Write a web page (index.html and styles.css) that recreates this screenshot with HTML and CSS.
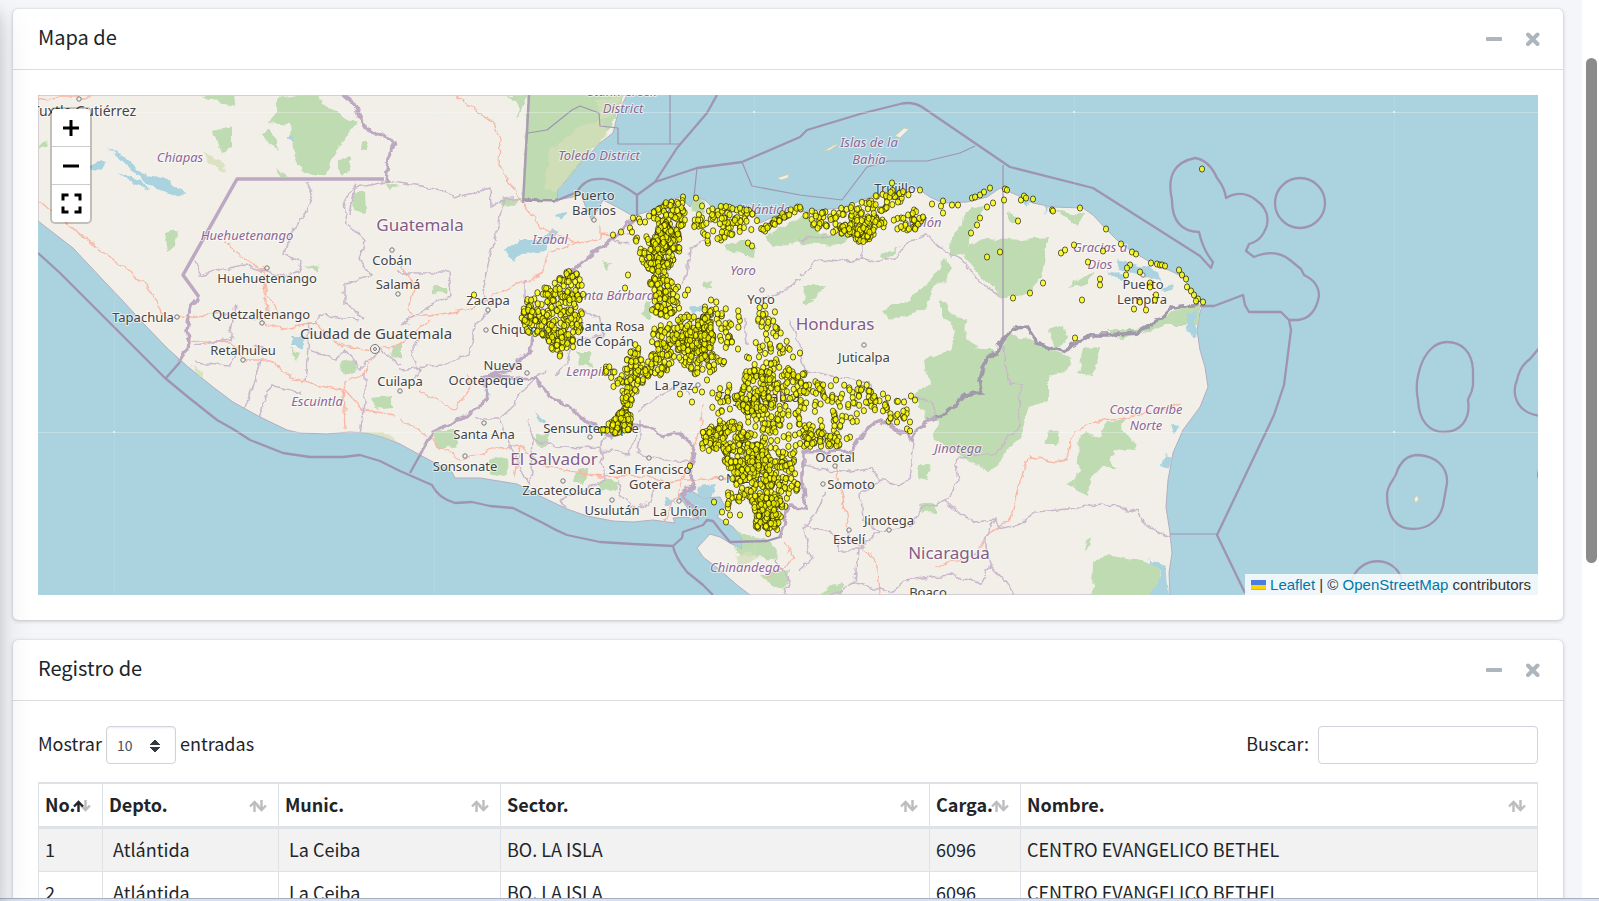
FILE: index.html
```html
<!DOCTYPE html>
<html lang="es">
<head>
<meta charset="utf-8">
<meta name="viewport" content="width=device-width, initial-scale=1">
<title>Mapa y registro</title>
<link rel="stylesheet" href="styles.css">
</head>
<body>
<svg class="sprite" aria-hidden="true">
  <symbol id="minus" viewBox="0 0 16 16"><rect x="0" y="6" width="16" height="4" rx="1"/></symbol>
  <symbol id="times" viewBox="0 0 14 14"><path d="M2 2.5L11.5 12M11.5 2.5L2 12" fill="none" stroke="currentColor" stroke-width="4" stroke-linecap="round"/></symbol>
  <symbol id="sort" viewBox="0 0 18 14"><g fill="none" stroke="currentColor" stroke-width="2.4"><path class="up" d="M5.500 13V3M1 7.500L5.500 3L10 7.500"/><path class="down" d="M12.500 1V11M8 6.500L12.500 11L17 6.500"/></g></symbol>
  <symbol id="sort-asc" viewBox="0 0 18 14"><g fill="none" stroke-width="2.4"><path stroke="#bcbdbf" d="M12.500 1V11M8 6.500L12.500 11L17 6.500"/><path stroke="#212529" d="M5.500 13V3M1 7.500L5.500 3L10 7.500"/></g></symbol>
</svg>
<div class="window">
  <div class="view">
    <div class="sidebar-edge"></div>
    <main class="content">
      <section class="card">
        <header class="card-header">
          <h3>Mapa de</h3>
          <div class="tools">
            <button type="button" aria-label="Contraer"><svg class="i-minus"><use href="#minus"/></svg></button>
            <button type="button" aria-label="Cerrar"><svg class="i-times"><use href="#times"/></svg></button>
          </div>
        </header>
        <div class="card-body">
          <div class="map">
            <svg class="tiles" viewBox="38 95 1500 500" preserveAspectRatio="xMidYMid slice" role="img" aria-label="Mapa de Honduras">
              <defs>
                <filter id="rough" x="-5%" y="-5%" width="110%" height="110%"><feTurbulence type="fractalNoise" baseFrequency="0.09" numOctaves="3" seed="4"/><feDisplacementMap in="SourceGraphic" scale="8" xChannelSelector="R" yChannelSelector="G"/></filter>
                <clipPath id="landclip"><path id="land" d="M38 95V221L73 248L103 280L122 300L143 323L167 348L187 366L213 387L233 402L260 417L287 430L300 433L327 434L350 432L367 433L383 437L400 444L420 455L452 472L455 478L480 478L517 484L540 496L567 509L587 516L613 521L633 522L653 520L675 523L673 518L687 517L695 520L687 507L678 495L690 490L703 498L720 497L725 507L717 517L733 527L742 538L742 549L730 543L720 537L710 534L697 548L703 557L720 570L737 585L750 595H1170L1169 573L1172 553L1170 533L1166 507L1168 480L1173 453L1183 430L1200 407L1208 387L1205 367L1200 350L1197 330L1200 312L1203 305L1196 298L1183 277L1173 272L1150 262L1130 250L1117 240L1107 230L1093 215L1083 208L1053 207L1033 203L1017 195L1000 188L987 197L967 202L943 203L930 197L917 188L890 192L867 198L843 208L817 210L800 212L793 208L773 217L760 223L753 212L733 212L713 208L705 200L695 197L690 207L680 197L663 202L653 210L633 216L617 207L603 200L597 211L592 221L585 205L580 192L573 197L557 200L557 190L567 180L577 167L587 157L600 143L613 133L618 113L627 95Z"/></clipPath>
              </defs>
              <rect x="-962" y="-405" width="3500" height="1500" fill="#aad3df"/>
              <use href="#land" fill="#f2efe9" stroke="#b5adc0" stroke-width="1"/>
              <g clip-path="url(#landclip)"><g fill="#bfdbb2" filter="url(#rough)">
                <path d="M529 90H627L618 113L600 143L567 180L557 200L523 200Z"/>
                <path d="M277 99L318 93L324 105L357 122L345 140L338 148L330 165L322 176L305 174L298 162L293 150L290 124L268 122L277 112Z"/>
                <path d="M200 95H236L234 106L220 102ZM213 132L232 127V148L222 152ZM260 133L270 130L279 151L270 146ZM353 193L365 193L366 212L354 210ZM275 168L288 178L280 177ZM362 140L368 140L367 152L361 150ZM340 160L350 155L350 172L340 176Z"/>
                <path d="M963 250L987 237L1020 240L1048 238L1045 260L1040 280L1030 292L1017 297L1003 297L985 280L967 262Z"/>
                <path d="M985 203L980 215L971 237L967 252L948 257L950 240L967 213ZM1008 210L1020 218L1017 222L1008 222ZM1055 210L1085 215L1078 225ZM1070 285L1093 270L1088 283L1068 287Z"/>
                <path d="M945 259L951 267L947 280L933 285L925 308L910 315L890 320L882 310L910 300L930 280ZM941 301L947 304L957 318L967 320L966 340L980 348L950 352L955 330L941 315Z"/>
                <path d="M925 360L957 346L983 350L998 350L1010 333L1030 340L1047 348L1072 358L1070 367L1047 377L1047 403L1030 407L1020 440L1007 450L1000 463L987 472L970 460L933 438L938 420L927 420L915 395L928 383Z"/>
                <path d="M1083 348L1100 347L1093 376L1078 373ZM1105 330L1135 330L1163 318L1185 305L1200 304V325L1165 325L1140 334L1120 338Z"/>
                <path d="M1108 422L1125 418L1122 430L1133 440L1135 450L1114 448L1110 462L1119 468L1102 468L1090 480L1088 495L1067 485L1080 473L1077 445L1085 432L1100 436ZM1048 432L1060 430L1057 445L1045 445ZM1085 540L1093 537L1087 552Z"/>
                <path d="M1093 560L1110 555L1153 562L1162 580L1153 600H1092Z"/>
                <path d="M765 235L790 223L805 215L820 232L800 242L775 247ZM725 245L745 240L757 250L753 256L728 252ZM800 230L850 238L840 245L800 243ZM880 255L900 247L885 260ZM804 285L824 285L817 298L803 302ZM815 300L805 305L802 300ZM918 465L930 465L928 480L918 478ZM920 505L935 502L935 512L922 513ZM690 195L705 200L702 215L692 212ZM578 352L590 352L592 366L580 365ZM645 302L650 300L650 320L643 317ZM600 262L610 264L607 270ZM703 282L713 280L712 288L704 287Z"/>
                <path d="M433 432L455 430L458 445L440 448L433 440ZM490 460L507 457L508 475L490 474ZM537 435L548 433L545 447L536 443ZM597 480L617 480L615 490L600 492ZM575 472L590 468L583 483L572 482ZM370 397L392 395L392 408L375 410ZM393 345L402 343L402 360L390 356ZM340 363L352 360L358 370L345 375ZM290 350L300 352L297 360ZM305 265L320 267L319 274ZM433 287L448 287L447 294L433 293ZM500 200L520 198L515 206L500 205ZM515 120L529 95H508L518 108ZM355 245L360 243ZM165 233L178 230L175 247L168 253ZM38 148L48 138L45 147ZM384 182L400 187L390 190ZM1048 330L1065 325L1067 340L1055 348ZM725 530L770 540L780 560L740 555ZM760 575L790 570L785 590L770 585ZM830 585L842 582L842 595H820Z"/>
              </g>
              <g fill="#d5dfb9" opacity=".8" filter="url(#rough)"><path d="M575 130L600 120L608 135L580 160L557 192L545 190L550 150ZM597 100L620 97L617 112L600 120ZM190 365L205 375L200 380ZM360 432L385 432L395 442L375 437ZM202 150L224 165L225 172L208 162ZM735 555L750 550L760 560L740 565Z"/></g>
              <g fill="#aad3df" filter="url(#rough)">
                <path d="M107 148L125 157L145 175L165 178L187 196L175 195L145 183L125 162ZM89 167L97 160L108 162L103 170ZM119 173L140 180L150 190L135 185Z"/>
                <path d="M504 250L520 240L540 240L553 228L560 231L545 250L522 253L512 263ZM556 215L567 213L560 222ZM290 337L306 337L302 347L292 347ZM536 413L546 420L545 424L537 420ZM484 387L492 393L488 397ZM287 137L294 135L292 143ZM695 488L715 485L710 500L700 505ZM665 497L678 505H667Z"/>
                <path d="M1115 260L1140 265L1158 270L1160 280L1140 275L1120 270ZM1108 270L1125 275L1127 282L1112 277ZM1042 205L1048 205L1047 213ZM1020 200L1030 202L1025 208ZM1160 290L1172 285L1170 292ZM1186 315L1197 310L1195 340L1187 330ZM1165 455L1175 457L1168 470L1162 466ZM1170 425L1180 427L1175 433ZM1150 558L1165 565L1168 595H1150L1160 575ZM690 307L705 305L700 312L692 313Z"/>
              </g></g>
              <g fill="none" stroke="#f9b7a5" stroke-width="1.300" filter="url(#rough)">
                <path d="M38 200L85 238L125 268L147 287L160 305L165 318L188 317L225 313L257 320L280 329L300 325L315 322L328 338L350 347L375 350L398 345M190 340L230 343L245 360L275 360L280 373L315 385L343 390L345 430M345 390L363 410L395 415M225 240L235 253L262 270L268 297L280 315M262 265L268 320M378 352L363 375L345 382L343 398"/>
                <path d="M455 95L495 125L500 140L499 165L522 202L545 230L580 243L600 238L600 225M600 234L635 236M580 240L550 253L540 275L490 297L465 310L415 318L407 310L415 285L400 265M398 345L430 320M38 100L60 97L90 97"/>
                <path d="M420 390L455 410L470 390L468 375M400 418L432 440L460 460L500 448L520 445L540 465L600 477L640 475L665 483L690 480L712 479L735 478M665 523L680 490L700 430L703 405M520 445L515 480"/>
                <path d="M835 465L843 498L850 540L870 555L878 568L880 595M990 533L1010 520L1025 465L1030 457L1065 462L1075 430L1105 420L1140 415L1180 404M990 533L975 555L935 568M785 540L792 560L765 580"/>
              </g>
              <g fill="none" stroke="#c9b8cb" stroke-width="1.500" filter="url(#rough)">
                <path d="M307 182L313 195L305 212L290 235L285 255L302 262L298 272L285 277L260 270L243 265L220 270L200 275L195 260M355 185L345 200L347 225L365 240L358 260L370 275L345 285L345 305L365 317M384 182L355 188L350 215M360 320L320 315L310 325L307 360L305 382M380 180L400 182L440 190L455 198L490 188L491 205L505 200L523 198M505 200L495 235L482 290L490 305M400 272L450 272L452 295L425 310L400 325M490 310L475 325L470 355L440 365L400 370M525 280L525 300L550 312L583 310L600 320L603 335L572 340L565 365L555 375"/>
                <path d="M235 305L230 340L195 345M263 350L255 345M195 362L230 365L240 345M260 360L250 400L245 408M260 417L270 385L290 390L300 395M310 350L335 360L345 350L360 370L380 350L400 365M365 372L365 405L360 432M420 340L410 350L420 370L413 380"/>
                <path d="M475 418L500 418L510 445L523 475L530 483L533 440L528 420M500 418L515 405L520 393L545 370M533 440L560 448L600 447L605 480L560 500L567 510M605 435L600 450L630 453L635 435M617 478L620 495L638 510L650 500L655 485M640 420L640 440L637 455L665 460L695 462M640 410L660 395L680 385L690 395M703 240L690 250L687 275L680 285M610 240L630 245"/>
                <path d="M800 240L835 235L862 240L862 258L840 262L820 260L800 275M862 258L875 262L895 258L910 240L925 235L945 250L962 260L980 283L1003 297M790 320L800 345L805 370L850 380L870 383L875 400M905 398L930 400L937 415M1003 345L1005 365L1010 383L1022 384L1017 410L1020 425L995 453L960 457L955 465L958 480L945 500L960 515L975 522L993 520L1000 528L1025 522L1035 512L1080 508L1102 505L1140 512L1145 525L1170 537M915 435L910 480L898 485L880 480L870 468L840 472L803 465M880 480L860 495L862 520L880 530L910 527L920 510L945 500M880 530L858 550L855 583L830 595M803 525L830 530L840 550L858 550M825 493L815 515L803 530L812 560L800 570M857 583L890 593L905 580L950 575L980 583L990 565L1007 583L1015 595M993 520L985 545L990 565M760 300L785 290L800 280M745 320L747 345M775 560L790 580L785 595"/>
              </g>
              <g fill="none" stroke="#bca8c1" stroke-width="3.500" stroke-linejoin="round">
                <path d="M384 179H237L183 275L199 297"/><path d="M529 95L523 203" stroke="#a99db0" stroke-width="2.500"/>
                <g filter="url(#rough)"><path d="M340 93L355 105L362 125L372 132L395 142L388 160L386 182M199 297L190 310L187 330L190 343L180 362M637 218L630 223L607 243L570 272M532 337L530 353L517 360L508 372L483 377L537 379L550 397L570 407L587 422L613 437L633 425L653 427L663 437L680 433L695 447L690 473L695 485L682 495L700 517M483 377L488 398L463 418L433 432L420 455M788 507L806 508L803 480L803 452L850 451L857 440L880 419L897 430L913 440L918 427L937 417M785 520L788 507M780 537L785 520"/>
                <path stroke="#a298ab" d="M937 417L947 413L963 397L983 392L980 380L987 357L998 353L1000 343L1013 328L1027 327L1037 343L1063 351L1077 343L1090 335L1107 335L1137 333L1163 317L1173 307L1200 304M523 200L558 201"/></g>
              </g>
              <g fill="none" stroke="#9f94b0" stroke-width="2.300" stroke-linejoin="round">
                <path d="M38 253L60 273L87 300L117 330L165 378L188 397L217 420L233 429L250 440L283 453L310 457L343 457L360 455L380 461L400 471L432 485Q438 498 455 503L472 502L490 506L513 508L543 523Q555 530 567 535L600 542L633 544L673 546Q675 557 687 572L703 585L713 595M673 546L682 538L683 532L703 525L707 520L713 521L720 530L730 542L767 541L780 537M180 362L166 378M420 455L410 473"/>
                <path d="M717 95L707 113L677 148L655 182L637 195Q613 178 600 179Q585 178 577 192L558 200M655 182L697 168L742 162L800 137L807 130L860 114L900 104Q912 101 922 107L1010 167L1093 188L1200 256L1211 268L1213 262Q1203 250 1199 232Q1172 231 1172 200Q1164 164 1195 158Q1209 160 1217 178Q1225 188 1226 198Q1242 189 1256 200Q1270 210 1267 225Q1262 241 1249 244L1246 251L1254 257Q1275 248 1290 260L1301 269L1304 275Q1319 282 1319 296Q1315 318 1298 320L1289 320L1281 312H1249L1245 305L1243 295L1214 306H1200M1289 320L1291 330L1284 385L1274 415L1217 535L1245 593M637 195V216"/>
                <circle cx="1300" cy="203" r="25"/>
                <path d="M1447 342C1462 342 1472 352 1473 370V385C1472 395 1468 397 1468 400C1471 420 1460 432 1444 432C1430 432 1419 422 1418 400C1415 385 1418 375 1420 368C1425 352 1435 342 1447 342ZM1418 455C1435 456 1448 466 1447 483L1444 500C1442 518 1430 529 1413 529C1395 529 1387 515 1387 495C1387 485 1394 480 1396 474C1400 462 1407 455 1418 455ZM1540 347L1530 359C1520 366 1518 375 1517 380C1512 392 1514 412 1540 416M1352 580C1360 555 1395 555 1402 580M1540 465L1538 475L1540 483"/>
                <g stroke-width="1.200"><path d="M742 162L752 186L800 195L842 200L867 167L888 161H910L927 161L960 153L975 146M697 168L694 197M1003 165V343M670 95V144M680 144H618V128L600 126L599 113L580 106L572 110L547 130L528 133M1170 534H1217"/></g>
              </g>
              <g fill="#f2efe9" stroke="#c7cfae" stroke-width="1"><path d="M822 152L834 145L840 143L830 150ZM895 136L904 128L909 129L900 138ZM777 178L789 174L788 178L781 180ZM1416 495L1419 499L1416 503L1414 500Z"/></g>
              <path class="seam" d="M38 112.500H1538M38 432.500H1538"/>
              <path class="seam faint" d="M114.500 95V595M434.500 95V595M754.500 95V595M1074.500 95V595M1394.500 95V595"/>
              <path fill="#d8f7fa" d="M113 431h2v2h-2zM433 111h2v2h-2zM753 111h2v2h-2zM1073 111h2v2h-2zM1393 111h2v2h-2zM1393 431h2v2h-2z"/>
              <g id="towns" class="towns"></g>
              <g class="city">
                <text x="84" y="116" class="big">Tuxtla Gutiérrez</text><text x="267" y="283">Huehuetenango</text><text x="392" y="265">Cobán</text><text x="398" y="289">Salamá</text><text x="261" y="319">Quetzaltenango</text><text x="143" y="322">Tapachula</text><text x="243" y="355">Retalhuleu</text><text x="376" y="339" class="mid">Ciudad de Guatemala</text><text x="400" y="386">Cuilapa</text><text x="488" y="305">Zacapa</text><text x="526" y="334">Chiquimula</text><text x="503" y="370">Nueva</text><text x="486" y="385">Ocotepeque</text><text x="484" y="439">Santa Ana</text><text x="465" y="471">Sonsonate</text><text x="562" y="495">Zacatecoluca</text><text x="612" y="515">Usulután</text><text x="680" y="516">La Unión</text><text x="650" y="474">San Francisco</text><text x="650" y="489">Gotera</text><text x="591" y="433">Sensuntepeque</text><text x="594" y="200">Puerto</text><text x="594" y="215">Barrios</text><text x="674" y="390">La Paz</text><text x="611" y="331">Santa Rosa</text><text x="605" y="346">de Copán</text><text x="761" y="304">Yoro</text><text x="864" y="362">Juticalpa</text><text x="895" y="193">Trujillo</text><text x="1143" y="289">Puerto</text><text x="1142" y="304">Lempira</text><text x="758" y="402" class="mid">Tegucigalpa</text><text x="755" y="483">Nacaome</text><text x="835" y="462">Ocotal</text><text x="851" y="489">Somoto</text><text x="889" y="525">Jinotega</text><text x="849" y="544">Estelí</text><text x="928" y="597">Boaco</text>
              </g>
              <g class="region">
                <text x="180" y="162">Chiapas</text><text x="247" y="240">Huehuetenango</text><text x="317" y="406">Escuintla</text><text x="550" y="244">Izabal</text><text x="599" y="160">Toledo District</text><text x="622" y="96">Stann Creek</text><text x="623" y="113">District</text><text x="590" y="376">Lempira</text><text x="612" y="300">Santa Bárbara</text><text x="743" y="275">Yoro</text><text x="765" y="214">Atlántida</text><text x="869" y="147">Islas de la</text><text x="869" y="164">Bahía</text><text x="925" y="227">Colón</text><text x="1100" y="252">Gracias a</text><text x="1100" y="269">Dios</text><text x="958" y="453">Jinotega</text><text x="745" y="572">Chinandega</text><text x="1146" y="414">Costa Caribe</text><text x="1146" y="430">Norte</text>
              </g>
              <g class="country">
                <text x="420" y="231">Guatemala</text><text x="554" y="465">El Salvador</text><text x="835" y="330">Honduras</text><text x="949" y="559">Nicaragua</text>
              </g>
              <g id="markers" class="markers"></g>
            </svg>
            <div class="zoom">
              <button type="button" aria-label="Acercar"><svg viewBox="0 0 16 16"><path d="M0 8H16M8 0V16"/></svg></button>
              <button type="button" aria-label="Alejar"><svg viewBox="0 0 16 16"><path d="M0 8H16"/></svg></button>
              <button type="button" aria-label="Pantalla completa"><svg class="full" viewBox="0 0 21 21"><path d="M2 7.500V2H7.500M13.500 2H19V7.500M19 13.500V19H13.500M7.500 19H2V13.500"/></svg></button>
            </div>
            <div class="attribution">
              <a href="#"><svg class="flag" viewBox="0 0 15 10"><path fill="#4c7be1" d="M0 0h15v5H0z"/><path fill="#ffd500" d="M0 5h15v4H0z"/><path fill="#e0bc00" d="M0 9h15v1H0z"/></svg> Leaflet</a> | © <a href="#">OpenStreetMap</a> contributors
            </div>
          </div>
        </div>
      </section>

      <section class="card">
        <header class="card-header">
          <h3>Registro de</h3>
          <div class="tools">
            <button type="button" aria-label="Contraer"><svg class="i-minus"><use href="#minus"/></svg></button>
            <button type="button" aria-label="Cerrar"><svg class="i-times"><use href="#times"/></svg></button>
          </div>
        </header>
        <div class="card-body">
          <div class="controls">
            <div class="length"><label for="rows">Mostrar</label><select id="rows"><option>10</option><option>25</option><option>50</option></select><span>entradas</span></div>
            <div class="search"><label for="query">Buscar:</label><input id="query" type="search"></div>
          </div>
          <table>
            <colgroup><col class="c-no"><col class="c-depto"><col class="c-munic"><col class="c-sector"><col class="c-carga"><col></colgroup>
            <thead>
              <tr>
                <th><button type="button">No.<svg><use href="#sort-asc"/></svg></button></th>
                <th><button type="button">Depto.<svg><use href="#sort"/></svg></button></th>
                <th><button type="button">Munic.<svg><use href="#sort"/></svg></button></th>
                <th><button type="button">Sector.<svg><use href="#sort"/></svg></button></th>
                <th><button type="button">Carga.<svg><use href="#sort"/></svg></button></th>
                <th><button type="button">Nombre.<svg><use href="#sort"/></svg></button></th>
              </tr>
            </thead>
            <tbody>
              <tr><td>1</td><td class="pad">Atlántida</td><td class="pad">La Ceiba</td><td>BO. LA ISLA</td><td>6096</td><td>CENTRO EVANGELICO BETHEL</td></tr>
              <tr><td>2</td><td class="pad">Atlántida</td><td class="pad">La Ceiba</td><td>BO. LA ISLA</td><td>6096</td><td>CENTRO EVANGELICO BETHEL</td></tr>
            </tbody>
          </table>
        </div>
      </section>
    </main>
    <div class="scrollbar"><div class="thumb"></div></div>
  </div>
  <div class="taskbar"></div>
</div>
<script src="map.js"></script>
</body>
</html>
```

FILE: styles.css
```css
* { box-sizing: border-box; }

body {
  margin: 0;
  color: #212529;
  font-family: "Noto Sans CJK JP", "Noto Sans", sans-serif;
  font-size: 18px;
  line-height: 30px;
}

button, input, select { font: inherit; color: inherit; }
button { padding: 0; border: 0; background: none; cursor: pointer; }
.sprite { display: none; }

.window { display: flex; flex-direction: column; height: 100vh; overflow: hidden; }
.view { position: relative; display: flex; flex: 1; min-height: 0; background: #f4f6f9; }
.content { flex: 1; min-width: 0; padding: 9px 19px 0 13px; overflow: hidden; }

.sidebar-edge {
  position: absolute;
  z-index: 2;
  top: 0;
  bottom: 0;
  left: -40px;
  width: 40px;
  box-shadow: 0 18px 35px rgba(0, 0, 0, .14), 0 12px 12px rgba(0, 0, 0, .12);
}

.scrollbar { width: 17px; padding: 58px 2px 0 4px; background: #fff; }
.thumb { height: 505px; border-radius: 6px; background: #8b8b8b; }
.taskbar { height: 3px; border-top: 1px solid #a9b0bd; background: #d8e1f3; }

.card {
  margin-bottom: 20px;
  border-radius: 5px;
  background: #fff;
  box-shadow: 0 0 1px rgba(0, 0, 0, .2), 0 1px 4px rgba(0, 0, 0, .2);
}
.card-header {
  display: flex;
  align-items: center;
  justify-content: space-between;
  height: 61px;
  padding: 0 23px 4px 25px;
  border-bottom: 1px solid #dcdddf;
}
.card-header h3 { margin: 0; font-size: 20px; font-weight: 400; line-height: 30px; }
.tools { display: flex; align-items: center; gap: 24px; padding-top: 4px; color: #adb5bd; }
.tools button { display: flex; }
.tools svg { fill: currentColor; }
.i-minus { width: 16px; height: 16px; }
.i-times { width: 14px; height: 14px; }
.card-body { padding: 25px; }

.map { position: relative; height: 500px; overflow: hidden; background: #aad3df; }
.tiles { display: block; width: 100%; height: 100%; }
.tiles text { font-family: "Noto Sans", sans-serif; font-size: 13px; text-anchor: middle; paint-order: stroke; stroke: rgba(255, 255, 255, .6); stroke-width: 2px; stroke-linejoin: round; }
.city text { fill: #444; }
.tiles .big { font-size: 14px; }
.tiles .mid { font-size: 15px; }
.region text { fill: #8d6794; font-style: italic; }
.country text { fill: #845c87; font-size: 17px; }
.seam { fill: none; stroke: #fff; stroke-opacity: .3; }
.faint { stroke-opacity: .1; }
.towns circle { fill: #f5f3ee; stroke: #777; stroke-width: 1px; }
.markers ellipse { fill: #ff0; fill-opacity: .75; stroke: #000; stroke-opacity: .6; stroke-width: 1px; }

.zoom {
  position: absolute;
  top: 12px;
  left: 12px;
  display: flex;
  flex-direction: column;
  border: 2px solid rgba(0, 0, 0, .2);
  border-radius: 5px;
  background: #fff;
  background-clip: padding-box;
}
.zoom button { display: flex; align-items: center; justify-content: center; width: 38px; height: 37px; }
.zoom button + button { height: 38px; border-top: 1px solid #ccc; }
.zoom svg { width: 16px; height: 16px; fill: none; stroke: #000; stroke-width: 3px; }
.zoom .full { width: 21px; height: 21px; stroke-width: 3px; }

.attribution {
  position: absolute;
  right: 0;
  bottom: 0;
  padding: 0 7px 0 6px;
  background: rgba(255, 255, 255, .8);
  color: #333;
  font-family: "Liberation Sans", sans-serif;
  font-size: 15px;
  line-height: 21px;
}
.attribution a { color: #0078a8; text-decoration: none; }
.flag { width: 15px; height: 10px; }

.controls { display: flex; justify-content: space-between; margin-bottom: 18px; }
.length, .search { display: flex; align-items: center; }
.length { gap: 4px; }
.length label, .length span, .search label { padding-bottom: 4px; }
.search { gap: 9px; }
select {
  width: 70px;
  height: 38px;
  padding: 0 10px;
  border: 1px solid #ced4da;
  border-radius: 4px;
  appearance: none;
  color: #495057;
  font-size: 14px;
  background:
    conic-gradient(from 135deg at 50% 0, #343a40 90deg, transparent 0) right 15px top 20px / 10px 5px no-repeat,
    #fff;
  background:
    linear-gradient(to top right, #343a40 50%, transparent 52%) right 15px top 13px / 5px 5px no-repeat,
    linear-gradient(to top left, #343a40 50%, transparent 52%) right 20px top 13px / 5px 5px no-repeat,
    linear-gradient(to bottom right, #343a40 50%, transparent 52%) right 15px top 20px / 5px 5px no-repeat,
    linear-gradient(to bottom left, #343a40 50%, transparent 52%) right 20px top 20px / 5px 5px no-repeat,
    #fff;
  box-shadow: inset 0 1px 2px rgba(0, 0, 0, .08);
}
input { width: 220px; height: 38px; padding: 0 10px; border: 1px solid #ced4da; border-radius: 4px; background: #fff; }

table { width: 100%; border-collapse: collapse; table-layout: fixed; border: 1px solid #dee2e6; }
.c-no { width: 64px; }
.c-depto { width: 176px; }
.c-munic { width: 222px; }
.c-sector { width: 429px; }
.c-carga { width: 91px; }
th, td { padding: 5px 6px 7px; border: 1px solid #dee2e6; text-align: left; white-space: nowrap; }
th { border-top-width: 2px; border-bottom-width: 3px; }
th button { display: flex; align-items: center; justify-content: space-between; width: 100%; height: 30px; padding-right: 5px; font-weight: 700; }
th svg { flex: none; width: 18px; height: 14px; margin: 4px 0 0 -4px; color: #bcbdbf; }
tbody tr:nth-child(odd) { background: #f2f2f2; }
td.pad { padding-left: 10px; }
```

FILE: map.js
```js
const NS = "http://www.w3.org/2000/svg";
let seed = 20240;
function random() {
  seed = (seed * 1664525 + 1013904223) % 4294967296;
  return seed / 4294967296;
}

const towns = [[79,99],[267,268],[392,250],[398,294],[262,323],[177,317],[243,360],[400,391],[488,310],[486,330],[527,373],[484,423],[465,456],[563,481],[612,500],[679,501],[649,458],[590,437],[594,220],[698,385],[762,290],[864,345],[1143,275],[721,478],[835,466],[823,484],[889,530],[849,530]];
const townLayer = document.getElementById("towns");
function ring(x, y, r) {
  const c = document.createElementNS(NS, "circle");
  c.setAttribute("cx", x); c.setAttribute("cy", y); c.setAttribute("r", r);
  townLayer.append(c);
}
towns.forEach(([x, y]) => ring(x, y, 2.2));
ring(375, 349, 4.5);
ring(375, 349, 1.5);

function inside(x, y, poly) {
  let hit = false;
  for (let i = 0, j = poly.length - 1; i < poly.length; j = i++) {
    const [xi, yi] = poly[i], [xj, yj] = poly[j];
    if ((yi > y) !== (yj > y) && x < (xj - xi) * (y - yi) / (yj - yi) + xi) hit = !hit;
  }
  return hit;
}

// Each area: number of sites, then its outline.
const areas = [
  [270, [[570,269],[577,273],[586,293],[582,300],[582,330],[573,337],[574,348],[560,358],[550,347],[543,335],[528,336],[521,320],[526,299],[547,285],[560,277]]],
  [150, [[663,202],[683,198],[686,215],[681,237],[679,255],[668,268],[658,272],[648,262],[656,245],[658,222],[650,214]]],
  [55, [[635,240],[660,232],[665,262],[650,274],[640,258]]],
  [70, [[652,240],[665,220],[672,232],[665,252],[655,250]]],
  [26, [[648,256],[670,262],[664,282],[655,284]]],
  [80, [[648,280],[660,276],[674,281],[682,310],[665,318],[652,310],[655,295]]],
  [220, [[652,328],[670,320],[700,311],[712,322],[718,345],[728,360],[715,376],[690,375],[680,360],[665,375],[642,377],[652,352]]],
  [60, [[668,335],[700,330],[712,350],[700,362],[680,350]]],
  [45, [[697,320],[712,312],[715,340],[702,345]]],
  [80, [[627,345],[640,343],[650,370],[643,384],[634,398],[628,410],[622,410],[628,390],[613,388],[604,370],[610,366],[624,376]]],
  [24, [[622,385],[634,388],[635,414],[622,414]]],
  [70, [[602,430],[612,420],[622,411],[633,416],[629,430],[612,434]]],
  [85, [[694,214],[720,206],[750,208],[760,224],[758,232],[740,232],[722,240],[705,242],[694,230]]],
  [36, [[760,229],[775,218],[795,206],[805,208],[785,217],[765,232]]],
  [130, [[802,210],[830,210],[855,204],[888,190],[914,192],[900,202],[882,216],[888,228],[862,243],[845,235],[818,229],[808,222]]],
  [50, [[838,228],[868,216],[888,222],[862,243]]],
  [30, [[892,220],[918,208],[926,222],[916,232],[897,230]]],
  [30, [[702,308],[712,300],[745,312],[742,340],[722,350]]],
  [50, [[752,303],[775,308],[785,340],[800,350],[785,356],[765,378],[752,372],[757,330]]],
  [270, [[712,388],[740,375],[770,365],[800,370],[804,400],[798,440],[794,462],[760,470],[740,455],[704,445],[712,425]]],
  [130, [[702,430],[745,425],[755,440],[775,460],[735,475],[718,455],[702,450]]],
  [210, [[728,460],[795,462],[800,497],[783,508],[779,530],[768,536],[756,528],[750,500],[728,505],[722,500],[734,485]]],
  [90, [[750,495],[783,500],[780,522],[768,534],[758,520]]],
  [105, [[798,370],[815,378],[832,385],[853,384],[868,385],[872,402],[855,425],[850,440],[800,447],[798,420]]],
  [45, [[798,428],[845,436],[840,446],[800,447]]],
  [32, [[868,392],[880,400],[905,400],[910,420],[885,422],[870,410]]],
  [60, [[742,403],[758,402],[758,411],[744,412]]],
  [50, [[742,370],[770,366],[775,410],[742,412]]]
];

const sites = [[613,235],[621,232],[630,228],[633,218],[639,219],[645,222],[649,216],[654,212],[640,222],[632,232],[637,238],[474,295],[628,275],[625,288],[683,197],[696,198],[702,206],[748,243],[752,246],[708,243],[721,240],[688,290],[685,295],[678,287],[680,394],[692,402],[690,466],[714,502],[722,512],[726,522],[740,515],[730,515],[728,508],[695,390],[702,392],[707,380],[711,300],[705,307],[716,309],[606,367],[613,372],[601,430],[892,183],[896,196],[920,190],[932,204],[941,206],[943,201],[943,213],[952,205],[958,205],[972,198],[975,197],[980,195],[984,192],[990,188],[987,207],[993,203],[1004,200],[1005,189],[1007,190],[1021,200],[1024,196],[1026,198],[1033,199],[1018,221],[1052,210],[1053,211],[1080,208],[980,218],[977,225],[971,233],[1000,252],[987,257],[1013,298],[1030,293],[1043,283],[1061,253],[1065,250],[1074,245],[1103,251],[1088,262],[1106,229],[1121,244],[1132,252],[1136,254],[1151,263],[1157,264],[1160,265],[1162,265],[1165,266],[1179,270],[1182,275],[1186,279],[1187,287],[1191,291],[1194,295],[1198,299],[1196,301],[1203,302],[1100,279],[1100,285],[1082,300],[1130,265],[1127,268],[1126,275],[1140,272],[1150,283],[1150,287],[1156,295],[1155,300],[1140,302],[1134,309],[1146,310],[1075,338],[1202,169],[836,380],[859,383],[859,390],[870,391],[871,392],[883,394],[911,396],[915,400],[888,398],[904,402],[910,422],[907,429],[910,431],[897,422],[800,353],[793,357],[788,348],[780,353],[766,334],[760,350],[747,357],[749,358],[738,349],[725,328],[730,337]];
for (const [count, poly] of areas) {
  const xs = poly.map(p => p[0]), ys = poly.map(p => p[1]);
  const x0 = Math.min(...xs), x1 = Math.max(...xs), y0 = Math.min(...ys), y1 = Math.max(...ys);
  for (let n = 0; n < count;) {
    const x = x0 + random() * (x1 - x0), y = y0 + random() * (y1 - y0);
    if (inside(x, y, poly)) { sites.push([x.toFixed(1), y.toFixed(1)]); n++; }
  }
}
document.getElementById("markers").innerHTML = sites
  .map(([x, y]) => `<ellipse cx="${x}" cy="${y}" rx="2.6" ry="3.1"/>`)
  .join("");
```
